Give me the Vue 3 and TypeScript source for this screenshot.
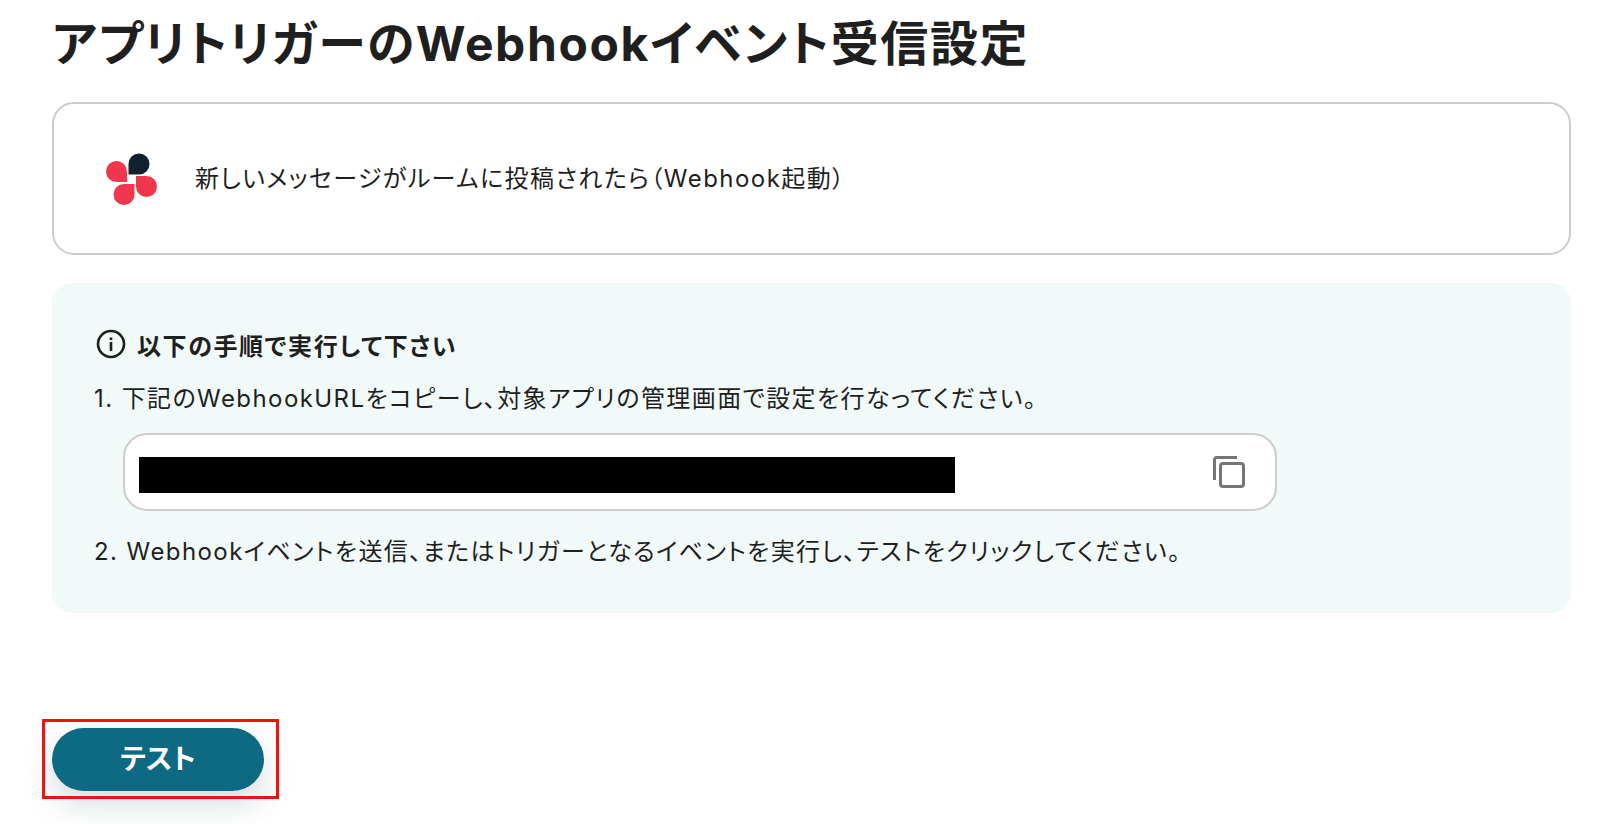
<template>
  <div class="page">
    <h1 class="title">アプリトリガーのWebhookイベント受信設定</h1>

    <div class="trigger-card">
      <svg class="logo" viewBox="0 0 60 60" aria-hidden="true">
        <path d="M28.500 25.500V15a10.500 10.500 0 1 1 10.500 10.500Z" fill="#12212f" />
        <path d="M27 33H16.500a10.500 10.500 0 1 1 10.500-10.500Z" fill="#f1374d" />
        <path d="M36 27h10.500a10.500 10.500 0 1 1-10.500 10.500Z" fill="#f1374d" />
        <path d="M34.500 35v10.500a10.500 10.500 0 1 1-10.500-10.500Z" fill="#f1374d" />
      </svg>
      <span class="trigger-name">新しいメッセージがルームに投稿されたら（Webhook起動）</span>
    </div>

    <div class="guide">
      <div class="guide-head">
        <svg class="info-icon" viewBox="0 0 30 30" aria-hidden="true">
          <circle cx="15" cy="15" r="13" fill="none" stroke="#1f1f1f" stroke-width="2.600" />
          <rect x="13.700" y="13" width="2.600" height="9" fill="#1f1f1f" />
          <rect x="13.700" y="8.500" width="2.600" height="2.600" fill="#1f1f1f" />
        </svg>
        <span>以下の手順で実行して下さい</span>
      </div>
      <p class="step">1. 下記のWebhookURLをコピーし、対象アプリの管理画面で設定を行なってください。</p>
      <div class="url-box">
        <div class="url-mask"></div>
        <svg class="copy-icon" viewBox="0 0 32 32" aria-hidden="true">
          <path d="M1.500 24V3.500A2 2 0 0 1 3.500 1.500H24" fill="none" stroke="#757575" stroke-width="3" />
          <rect x="7.500" y="7.500" width="23" height="23" rx="2.500" fill="none" stroke="#757575" stroke-width="3" />
        </svg>
      </div>
      <p class="step">2. Webhookイベントを送信、またはトリガーとなるイベントを実行し、テストをクリックしてください。</p>
    </div>

    <div class="actions">
      <button class="test-button" type="button">テスト</button>
      <div class="highlight"></div>
    </div>
  </div>
</template>

<script setup lang="ts">
</script>

<style scoped>
.page {
  height: 824px;
  box-sizing: border-box;
  padding: 14px 29px 0 52px;
  overflow: hidden;
  background: #fff;
  color: #1f1f1f;
  font-family: Inter, "Noto Sans CJK JP", sans-serif;
  font-feature-settings: "palt";
}

.title {
  margin: 0;
  height: 60px;
  font-size: 48px;
  line-height: 60px;
  font-weight: 700;
  white-space: nowrap;
  letter-spacing: 1.6px;
}

.trigger-card {
  margin-top: 28px;
  height: 153px;
  box-sizing: border-box;
  border: 2px solid #cccccc;
  border-radius: 22px;
  display: flex;
  align-items: center;
  padding-left: 46px;
  gap: 35px;
}

.logo {
  width: 60px;
  height: 60px;
  flex-shrink: 0;
}

.trigger-name {
  font-size: 24px;
  line-height: 30px;
  white-space: nowrap;
  letter-spacing: 1.45px;
}

.guide {
  margin-top: 28px;
  height: 330px;
  box-sizing: border-box;
  padding: 43px 42px 0;
  background: #f1faf9;
  border-radius: 20px;
}

.guide-head {
  display: flex;
  align-items: center;
  gap: 11px;
  height: 36px;
  margin-left: 2px;
  font-size: 24px;
  font-weight: 700;
  letter-spacing: 1.6px;
}

.info-icon {
  width: 30px;
  height: 30px;
  flex-shrink: 0;
}

.step {
  margin: 0;
  font-size: 24px;
  line-height: 36px;
  white-space: nowrap;
  letter-spacing: 1.42px;
}

.guide-head + .step {
  margin-top: 19px;
}

.url-box {
  margin: 16px 0 23px 29px;
  width: 1154px;
  height: 78px;
  box-sizing: border-box;
  background: #fff;
  border: 2px solid #cccccc;
  border-radius: 24px;
  display: flex;
  align-items: center;
  justify-content: space-between;
  padding: 0 30px 0 14px;
}

.url-mask {
  width: 816px;
  height: 36px;
  margin-top: 6px;
  background: #000;
}

.copy-icon {
  width: 32px;
  height: 32px;
}

.actions {
  position: relative;
  margin-top: 115px;
  width: 212px;
}

.test-button {
  display: block;
  width: 212px;
  height: 63px;
  padding: 0 0 6px;
  border: none;
  border-radius: 32px;
  background: #0d6a82;
  color: #fff;
  font-family: inherit;
  font-feature-settings: "palt";
  font-size: 28px;
  font-weight: 700;
  box-shadow: 0 14px 32px rgba(30, 60, 80, 0.18);
}

.highlight {
  position: absolute;
  left: -10px;
  top: -9px;
  width: 237px;
  height: 80px;
  box-sizing: border-box;
  border: 3.5px solid #f4100f;
}
</style>
